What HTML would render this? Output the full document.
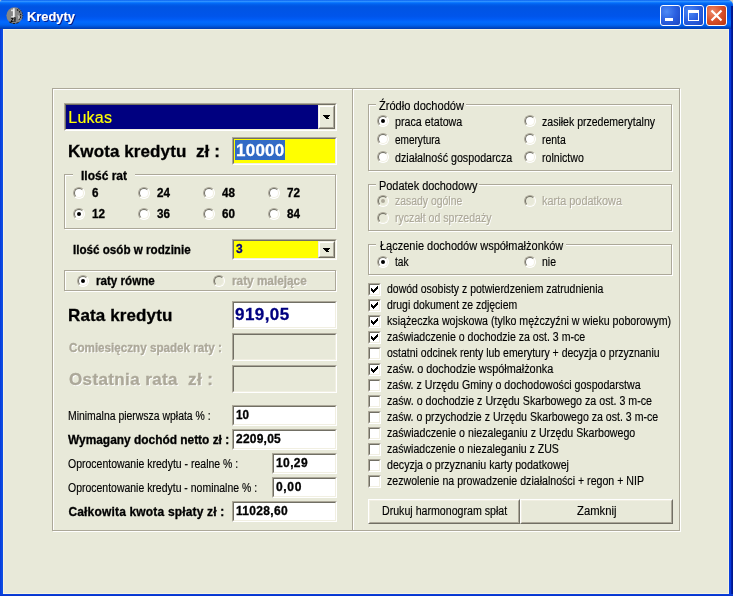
<!DOCTYPE html>
<html lang="pl"><head><meta charset="utf-8"><title>Kredyty</title>
<style>
html,body{margin:0;padding:0;}
body{width:733px;height:596px;overflow:hidden;background:#e8e9d9;font-family:"Liberation Sans",sans-serif;font-size:11px;color:#000;position:relative;}
.win *{position:absolute;box-sizing:border-box;}
.win{position:absolute;left:0;top:0;width:733px;height:596px;overflow:hidden;background:#e8e9d9;}
.title{left:0;top:0;width:733px;height:29px;background:linear-gradient(to bottom,#0058ee 0%,#3593ff 4%,#288eff 6%,#127dff 8%,#036ffc 10%,#0262ee 14%,#0057e5 20%,#0054e3 24%,#0055eb 56%,#005bf5 66%,#026afe 76%,#0062ef 86%,#0052d6 92%,#0046c0 96%,#003cb0 100%);border-radius:2px 5px 0 0;}
.corner{left:0;top:0;width:733px;height:10px;background:#d4d0c4;}
.tre{left:731px;top:6px;width:2px;height:23px;background:linear-gradient(to right,#001c9c,#001488);}
.bl{left:0;top:29px;width:3px;height:567px;background:linear-gradient(to right,#0838dc,#0a48e0 50%,#1050e4);}
.br{left:729px;top:29px;width:4px;height:567px;background:linear-gradient(to right,#0840e0 0,#0838dc 45%,#001c9c 65%,#001488 100%);}
.bb{left:0;top:594px;width:733px;height:2px;background:linear-gradient(to bottom,#0a44e0,#0830c8);}
.cream{left:3px;top:29px;width:726px;height:565px;border:1px solid #f6f2e2;}
.lbl.ttext{color:#fff;font-weight:bold;font-size:13px;text-shadow:1px 1px 0 #0a1883;}
.tb{top:5px;width:21px;height:21px;border:1px solid #fff;border-radius:3px;background:radial-gradient(circle at 30% 30%,#4e8af5 0%,#2a5fe0 50%,#1c46c0 100%);}
.tb.close{background:radial-gradient(circle at 30% 30%,#ee8a6a 0%,#d8502a 50%,#b83510 100%);}
.lbl{white-space:nowrap;line-height:20px;font-size:12px;transform-origin:0 50%;}
.lbl{-webkit-text-stroke:0.15px currentColor;}
.txt{left:0;top:0;width:733px;height:596px;will-change:transform;}
.b{font-size:12px;font-weight:bold;-webkit-text-stroke:0.3px currentColor;}
.dis{color:#aca899;text-shadow:1px 1px 0 #fff;}
.etch{border:1px solid #aca899;}
.etchw{border:1px solid #fff;}
.cap{background:#e8e9d9;height:4px;}
.inp{border:1px solid;border-color:#aca899 #fff #fff #aca899;background:#fff;}
.inp>i{left:0;top:0;right:0;bottom:0;border:1px solid;border-color:#716f64 #f1efe2 #f1efe2 #716f64;}
.inp.d{background:#e8e9d9;}
.radio{width:12px;height:12px;border-radius:50%;background:#fff;border:1px solid;border-color:#aca899 #fff #fff #aca899;}
.radio:before{content:"";position:absolute;left:0;top:0;right:0;bottom:0;border-radius:50%;border:1px solid;border-color:#716f64 #f1efe2 #f1efe2 #716f64;}
.radio.on:after{content:"";position:absolute;left:3px;top:3px;width:4px;height:4px;border-radius:50%;background:#000;}
.radio.d{background:#e8e9d9;}
.radio.d.on:after{background:#aca899;}
.cb{width:13px;height:13px;background:#fff;border:1px solid;border-color:#aca899 #fff #fff #aca899;}
.cb:before{content:"";position:absolute;left:0;top:0;right:0;bottom:0;border:1px solid;border-color:#716f64 #f1efe2 #f1efe2 #716f64;}
.btn{border:1px solid;border-color:#fff #716f64 #716f64 #fff;background:#e8e9d9;}
.btn:before{content:"";position:absolute;left:0;top:0;right:0;bottom:0;border:1px solid;border-color:#f1efe2 #aca899 #aca899 #f1efe2;}
.dd{width:17px;border:1px solid;border-color:#f1efe2 #716f64 #716f64 #f1efe2;background:#e8e9d9;}
.dd:before{content:"";position:absolute;left:0;top:0;right:0;bottom:0;border:1px solid;border-color:#fff #aca899 #aca899 #fff;}
.dd b{left:4px;width:7px;height:1px;background:#000;box-shadow:0 0 0 #000}
.dd b:before{content:"";position:absolute;left:1px;top:1px;width:5px;height:1px;background:#000;}
.dd b:after{content:"";position:absolute;left:2px;top:2px;width:3px;height:1px;background:#000;box-shadow:1px 1px 0 -0px #000;}
</style></head><body><div class="win">
<div class="corner"></div>
<div class="title"></div><div class="tre"></div>
<div class="cream"></div><div class="bl"></div><div class="br"></div><div class="bb"></div>

<svg style="left:6px;top:7px;will-change:transform" width="18" height="18" viewBox="0 0 18 18"><circle cx="8.5" cy="8.4" r="8.1" fill="#868686"/><path d="M3.5 14.8 A8.1 8.1 0 0 0 13.5 14.8" stroke="#1a1a1a" stroke-width="1.1" fill="none" stroke-dasharray="2.5 1"/><path d="M12.5 1.6 A8.1 8.1 0 0 1 16.2 11.5" stroke="#222" stroke-width="1" fill="none" stroke-dasharray="1.2 1.4"/><path d="M11 2.5 L13.5 4.5 L14.8 7.5 L14.5 10.5 L13 12.5" stroke="#1a1a1a" stroke-width="1.3" fill="none" stroke-dasharray="1.6 1.2"/><path d="M12.2 8.5 L13.3 10 L12.4 11.6" stroke="#eee" stroke-width="0.9" fill="none"/><rect x="6.9" y="1.3" width="1.8" height="9" fill="#f4f4f4"/><rect x="5.2" y="2.6" width="1.6" height="1.6" fill="#f4f4f4"/><rect x="5.4" y="9" width="1.4" height="1.2" fill="#e8e8e8"/><text x="4.6" y="14.6" font-family="Liberation Sans, sans-serif" font-weight="bold" font-size="6.8" fill="#000">zł</text></svg>
<div class="tb" style="left:660px"><div style="left:4px;top:12px;width:8px;height:3px;background:#fff"></div></div>
<div class="tb" style="left:683px"><div style="left:4px;top:4px;width:11px;height:11px;border:1px solid #fff;border-top-width:3px"></div></div>
<div class="tb close" style="left:706px"><svg style="left:3px;top:3px" width="13" height="13" viewBox="0 0 13 13"><path d="M1.5 1.5 L11.5 11.5 M11.5 1.5 L1.5 11.5" stroke="#fff" stroke-width="2.2"/></svg></div>
<div class="etchw" style="left:53px;top:89px;width:628px;height:443px"></div>
<div class="etch" style="left:52px;top:88px;width:628px;height:443px"></div>
<div style="left:352px;top:89px;width:1px;height:441px;background:#aca899"></div><div style="left:353px;top:90px;width:1px;height:440px;background:#fff"></div>
<div class="inp " style="left:64px;top:103px;width:273px;height:28px;background:#000080"><i></i></div>
<div class="dd" style="left:318px;top:105px;height:24px"><b style="top:9px"></b></div>
<div class="inp " style="left:232px;top:137px;width:105px;height:28px;background:#ffff00"><i></i></div>
<div style="left:235px;top:140px;width:50px;height:20px;background:#316ac5"></div>
<div class="etchw" style="left:65px;top:175px;width:272px;height:55px"></div>
<div class="etch" style="left:64px;top:174px;width:272px;height:55px"></div>
<div class="cap" style="left:73px;top:173px;width:62px"></div>
<div class="radio" style="left:73px;top:187px"></div>
<div class="radio" style="left:138px;top:187px"></div>
<div class="radio" style="left:203px;top:187px"></div>
<div class="radio" style="left:268px;top:187px"></div>
<div class="radio on" style="left:73px;top:208px"></div>
<div class="radio" style="left:138px;top:208px"></div>
<div class="radio" style="left:203px;top:208px"></div>
<div class="radio" style="left:268px;top:208px"></div>
<div class="inp " style="left:232px;top:239px;width:105px;height:21px;background:#ffff00"><i></i></div>
<div class="dd" style="left:318px;top:241px;height:17px"><b style="top:6px"></b></div>
<div class="etchw" style="left:65px;top:271px;width:272px;height:21px"></div>
<div class="etch" style="left:64px;top:270px;width:272px;height:21px"></div>
<div class="radio on" style="left:77px;top:275px"></div>
<div class="radio d" style="left:213px;top:275px"></div>
<div class="inp " style="left:232px;top:301px;width:105px;height:28px;"><i></i></div>
<div class="inp d" style="left:232px;top:333px;width:105px;height:28px;"><i></i></div>
<div class="inp d" style="left:232px;top:365px;width:105px;height:28px;"><i></i></div>
<div class="inp " style="left:232px;top:405px;width:105px;height:21px;"><i></i></div>
<div class="inp " style="left:232px;top:429px;width:105px;height:21px;"><i></i></div>
<div class="inp " style="left:272px;top:453px;width:65px;height:21px;"><i></i></div>
<div class="inp " style="left:272px;top:477px;width:65px;height:21px;"><i></i></div>
<div class="inp " style="left:232px;top:501px;width:105px;height:21px;"><i></i></div>
<div class="etchw" style="left:369px;top:105px;width:304px;height:67px"></div>
<div class="etch" style="left:368px;top:104px;width:304px;height:67px"></div>
<div class="cap" style="left:376px;top:103px;width:90px"></div>
<div class="radio on" style="left:377px;top:115px"></div>
<div class="radio" style="left:524px;top:115px"></div>
<div class="radio" style="left:377px;top:133px"></div>
<div class="radio" style="left:524px;top:133px"></div>
<div class="radio" style="left:377px;top:151px"></div>
<div class="radio" style="left:524px;top:151px"></div>
<div class="etchw" style="left:369px;top:185px;width:304px;height:47px"></div>
<div class="etch" style="left:368px;top:184px;width:304px;height:47px"></div>
<div class="cap" style="left:376px;top:183px;width:103px"></div>
<div class="radio on d" style="left:377px;top:195px"></div>
<div class="radio d" style="left:524px;top:195px"></div>
<div class="radio d" style="left:377px;top:212px"></div>
<div class="etchw" style="left:369px;top:245px;width:304px;height:31px"></div>
<div class="etch" style="left:368px;top:244px;width:304px;height:31px"></div>
<div class="cap" style="left:376px;top:243px;width:190px"></div>
<div class="radio on" style="left:377px;top:256px"></div>
<div class="radio" style="left:524px;top:256px"></div>
<div class="cb" style="left:368px;top:283px"><svg style="left:-1px;top:-1px" width="13" height="13" viewBox="0 0 13 13" shape-rendering="crispEdges"><path d="M3 5h1v1h1v1h1v-1h1v-1h1v-1h1v-1h1v3h-1v1h-1v1h-1v1h-1v1h-1v-1h-1v-1h-1z" fill="#000"/></svg></div>
<div class="cb" style="left:368px;top:299px"><svg style="left:-1px;top:-1px" width="13" height="13" viewBox="0 0 13 13" shape-rendering="crispEdges"><path d="M3 5h1v1h1v1h1v-1h1v-1h1v-1h1v-1h1v3h-1v1h-1v1h-1v1h-1v1h-1v-1h-1v-1h-1z" fill="#000"/></svg></div>
<div class="cb" style="left:368px;top:315px"><svg style="left:-1px;top:-1px" width="13" height="13" viewBox="0 0 13 13" shape-rendering="crispEdges"><path d="M3 5h1v1h1v1h1v-1h1v-1h1v-1h1v-1h1v3h-1v1h-1v1h-1v1h-1v1h-1v-1h-1v-1h-1z" fill="#000"/></svg></div>
<div class="cb" style="left:368px;top:331px"><svg style="left:-1px;top:-1px" width="13" height="13" viewBox="0 0 13 13" shape-rendering="crispEdges"><path d="M3 5h1v1h1v1h1v-1h1v-1h1v-1h1v-1h1v3h-1v1h-1v1h-1v1h-1v1h-1v-1h-1v-1h-1z" fill="#000"/></svg></div>
<div class="cb" style="left:368px;top:347px"></div>
<div class="cb" style="left:368px;top:363px"><svg style="left:-1px;top:-1px" width="13" height="13" viewBox="0 0 13 13" shape-rendering="crispEdges"><path d="M3 5h1v1h1v1h1v-1h1v-1h1v-1h1v-1h1v3h-1v1h-1v1h-1v1h-1v1h-1v-1h-1v-1h-1z" fill="#000"/></svg></div>
<div class="cb" style="left:368px;top:379px"></div>
<div class="cb" style="left:368px;top:395px"></div>
<div class="cb" style="left:368px;top:411px"></div>
<div class="cb" style="left:368px;top:427px"></div>
<div class="cb" style="left:368px;top:443px"></div>
<div class="cb" style="left:368px;top:459px"></div>
<div class="cb" style="left:368px;top:475px"></div>
<div class="btn" style="left:368px;top:499px;width:152px;height:25px"></div>
<div class="btn" style="left:520px;top:499px;width:153px;height:25px"></div>
<div class="txt">
<div class="lbl ttext" style="left:27px;top:7px;transform:scaleX(0.9913);">Kredyty</div>
<div class="lbl " style="left:68.3px;top:108px;letter-spacing:0.259px;font-size:16px;color:#ffff00">Lukas</div>
<div class="lbl b" style="left:68px;top:142px;letter-spacing:0.095px;font-size:17px">Kwota kredytu&nbsp; zł :</div>
<div class="lbl b" style="left:236px;top:141px;letter-spacing:0.244px;font-size:17px;color:#fff">10000</div>
<div class="lbl b" style="left:80.6px;top:166px;transform:scaleX(0.9993);">Ilość rat</div>
<div class="lbl b" style="left:91.5px;top:183px;transform:scaleX(0.9720);">6</div>
<div class="lbl b" style="left:156.5px;top:183px;transform:scaleX(0.9731);">24</div>
<div class="lbl b" style="left:221.5px;top:183px;transform:scaleX(0.9731);">48</div>
<div class="lbl b" style="left:286.5px;top:183px;transform:scaleX(0.9731);">72</div>
<div class="lbl b" style="left:91.5px;top:204px;transform:scaleX(0.9731);">12</div>
<div class="lbl b" style="left:156.5px;top:204px;transform:scaleX(0.9731);">36</div>
<div class="lbl b" style="left:221.5px;top:204px;transform:scaleX(0.9731);">60</div>
<div class="lbl b" style="left:286.5px;top:204px;transform:scaleX(0.9731);">84</div>
<div class="lbl b" style="left:73px;top:240px;transform:scaleX(0.9698);">Ilość osób w rodzinie</div>
<div class="lbl b" style="left:236px;top:239px;letter-spacing:0.112px;color:#000080">3</div>
<div class="lbl b" style="left:95.5px;top:271px;transform:scaleX(0.9673);">raty równe</div>
<div class="lbl b dis" style="left:231.7px;top:271px;transform:scaleX(0.9821);">raty malejące</div>
<div class="lbl b" style="left:68px;top:306px;letter-spacing:0.126px;font-size:17px">Rata kredytu</div>
<div class="lbl b" style="left:235px;top:305px;letter-spacing:0.433px;font-size:17px;color:#000080">919,05</div>
<div class="lbl b dis" style="left:69px;top:338px;transform:scaleX(0.9707);">Comiesięczny spadek raty :</div>
<div class="lbl b dis" style="left:69px;top:370px;letter-spacing:0.380px;font-size:17px">Ostatnia rata&nbsp; zł :</div>
<div class="lbl " style="left:68.4px;top:406px;transform:scaleX(0.8692);">Minimalna pierwsza wpłata % :</div>
<div class="lbl b" style="left:236px;top:405px;transform:scaleX(0.9731);">10</div>
<div class="lbl b" style="left:68.4px;top:430px;transform:scaleX(0.9923);">Wymagany dochód netto zł :</div>
<div class="lbl b" style="left:236px;top:429px;letter-spacing:0.230px;">2209,05</div>
<div class="lbl " style="left:68.4px;top:454px;transform:scaleX(0.8739);">Oprocentowanie kredytu - realne % :</div>
<div class="lbl b" style="left:276px;top:453px;letter-spacing:0.394px;">10,29</div>
<div class="lbl " style="left:68.4px;top:478px;transform:scaleX(0.8723);">Oprocentowanie kredytu - nominalne % :</div>
<div class="lbl b" style="left:276px;top:477px;letter-spacing:0.660px;">0,00</div>
<div class="lbl b" style="left:68.4px;top:502px;letter-spacing:0.175px;">Całkowita kwota spłaty zł :</div>
<div class="lbl b" style="left:236px;top:501px;letter-spacing:0.326px;">11028,60</div>
<div class="lbl " style="left:379.2px;top:96px;transform:scaleX(0.9233);">Źródło dochodów</div>
<div class="lbl " style="left:394.9px;top:112px;transform:scaleX(0.8927);">praca etatowa</div>
<div class="lbl " style="left:541.5px;top:112px;transform:scaleX(0.8779);">zasiłek przedemerytalny</div>
<div class="lbl " style="left:394.9px;top:130px;transform:scaleX(0.8366);">emerytura</div>
<div class="lbl " style="left:541.5px;top:130px;transform:scaleX(0.8699);">renta</div>
<div class="lbl " style="left:394.9px;top:148px;transform:scaleX(0.8925);">działalność gospodarcza</div>
<div class="lbl " style="left:541.5px;top:148px;transform:scaleX(0.8826);">rolnictwo</div>
<div class="lbl " style="left:378.8px;top:176px;transform:scaleX(0.9105);">Podatek dochodowy</div>
<div class="lbl dis" style="left:394.9px;top:191px;transform:scaleX(0.8696);">zasady ogólne</div>
<div class="lbl dis" style="left:541.5px;top:191px;transform:scaleX(0.9084);">karta podatkowa</div>
<div class="lbl dis" style="left:394.9px;top:208px;transform:scaleX(0.8822);">ryczałt od sprzedaży</div>
<div class="lbl " style="left:380px;top:236px;transform:scaleX(0.9159);">Łączenie dochodów współmałżonków</div>
<div class="lbl " style="left:394.9px;top:252px;transform:scaleX(0.8492);">tak</div>
<div class="lbl " style="left:541.5px;top:252px;transform:scaleX(0.8741);">nie</div>
<div class="lbl " style="left:386.8px;top:279px;transform:scaleX(0.8717);">dowód osobisty z potwierdzeniem zatrudnienia</div>
<div class="lbl " style="left:386.8px;top:295px;transform:scaleX(0.8714);">drugi dokument ze zdjęciem</div>
<div class="lbl " style="left:386.8px;top:311px;transform:scaleX(0.8857);">książeczka wojskowa (tylko mężczyźni w wieku poborowym)</div>
<div class="lbl " style="left:386.8px;top:327px;transform:scaleX(0.8817);">zaświadczenie o dochodzie za ost. 3 m-ce</div>
<div class="lbl " style="left:386.8px;top:343px;transform:scaleX(0.8742);">ostatni odcinek renty lub emerytury + decyzja o przyznaniu</div>
<div class="lbl " style="left:386.8px;top:359px;transform:scaleX(0.9060);">zaśw. o dochodzie współmałżonka</div>
<div class="lbl " style="left:386.8px;top:375px;transform:scaleX(0.8842);">zaśw. z Urzędu Gminy o dochodowości gospodarstwa</div>
<div class="lbl " style="left:386.8px;top:391px;transform:scaleX(0.8888);">zaśw. o dochodzie z Urzędu Skarbowego za ost. 3 m-ce</div>
<div class="lbl " style="left:386.8px;top:407px;transform:scaleX(0.8820);">zaśw. o przychodzie z Urzędu Skarbowego za ost. 3 m-ce</div>
<div class="lbl " style="left:386.8px;top:423px;transform:scaleX(0.8862);">zaświadczenie o niezaleganiu z Urzędu Skarbowego</div>
<div class="lbl " style="left:386.8px;top:439px;transform:scaleX(0.8795);">zaświadczenie o niezaleganiu z ZUS</div>
<div class="lbl " style="left:386.8px;top:455px;transform:scaleX(0.8854);">decyzja o przyznaniu karty podatkowej</div>
<div class="lbl " style="left:386.8px;top:471px;transform:scaleX(0.8836);">zezwolenie na prowadzenie działalności + regon + NIP</div>
<div class="lbl " style="left:381.8px;top:501px;transform:scaleX(0.8854);">Drukuj harmonogram spłat</div>
<div class="lbl " style="left:577px;top:501px;transform:scaleX(0.9401);">Zamknij</div>
</div>
</div></body></html>
